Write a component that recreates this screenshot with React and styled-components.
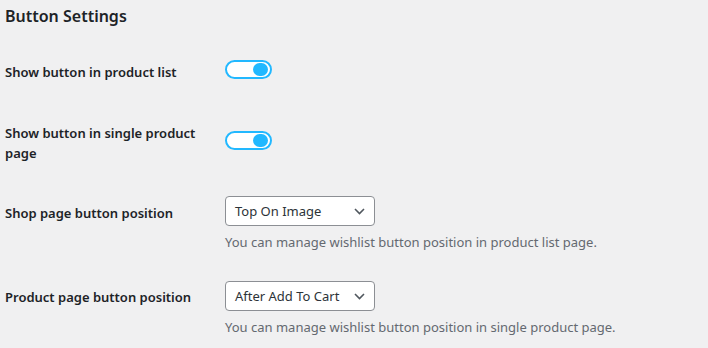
import React from "react";
import styled, { createGlobalStyle } from "styled-components";

const GlobalStyle = createGlobalStyle`
  body {
    margin: 0;
    background: #f0f0f1;
    font-family: "Noto Sans", "Open Sans", sans-serif;
    color: #1d2327;
  }
`;

const Page = styled.div`
  width: 708px;
  height: 348px;
  padding: 4px 0 0 5px;
  box-sizing: border-box;
  overflow: hidden;
`;

const Title = styled.h2`
  margin: 0;
  font-size: 16px;
  line-height: 24px;
  font-weight: 600;
`;

const Row = styled.div`
  display: flex;
  align-items: flex-start;
  margin-top: ${(p) => p.$gap}px;
`;

const Label = styled.div`
  width: 220px;
  flex-shrink: 0;
  font-size: 13px;
  font-weight: 600;
  line-height: 20px;
  margin-top: ${(p) => p.$offset || 0}px;
  padding-right: 10px;
  box-sizing: border-box;
`;

const Field = styled.div`
  display: flex;
  flex-direction: column;
  margin-top: ${(p) => p.$offset || 0}px;
`;

const Toggle = styled.div`
  width: 47px;
  height: 19px;
  box-sizing: border-box;
  border: 2px solid #22b8ff;
  border-radius: 10px;
  background: #fff;
  display: flex;
  align-items: center;
  justify-content: flex-end;
  padding: 0 2px;
`;

const Knob = styled.span`
  width: 15px;
  height: 13px;
  border-radius: 8px;
  background: #22b8ff;
`;

const Select = styled.div`
  width: 150px;
  height: 30px;
  box-sizing: border-box;
  border: 1px solid #8c8f94;
  border-radius: 4px;
  background: #fff;
  display: flex;
  align-items: center;
  justify-content: space-between;
  padding: 0 9px 0 9px;
  font-size: 13px;
  color: #2c3338;
`;

const Description = styled.p`
  margin: 7px 0 0;
  font-size: 13px;
  line-height: 18px;
  color: #646970;
`;

const Chevron = () => (
  <svg width="11" height="7" viewBox="0 0 11 7">
    <path d="M1 1l4.5 4.5L10 1" fill="none" stroke="#50575e" strokeWidth="1.6" />
  </svg>
);

const Switch = () => (
  <Toggle>
    <Knob />
  </Toggle>
);

const Dropdown = ({ value }) => (
  <Select>
    <span>{value}</span>
    <Chevron />
  </Select>
);

export default function App() {
  return (
    <>
      <GlobalStyle />
      <Page>
        <Title>Button Settings</Title>
        <Row $gap={32}>
          <Label $offset={2}>Show button in product list</Label>
          <Field>
            <Switch />
          </Field>
        </Row>
        <Row $gap={41}>
          <Label>Show button in single product page</Label>
          <Field $offset={8}>
            <Switch />
          </Field>
        </Row>
        <Row $gap={33}>
          <Label $offset={7}>Shop page button position</Label>
          <Field>
            <Dropdown value="Top On Image" />
            <Description>You can manage wishlist button position in product list page.</Description>
          </Field>
        </Row>
        <Row $gap={30}>
          <Label $offset={6}>Product page button position</Label>
          <Field>
            <Dropdown value="After Add To Cart" />
            <Description>You can manage wishlist button position in single product page.</Description>
          </Field>
        </Row>
      </Page>
    </>
  );
}
